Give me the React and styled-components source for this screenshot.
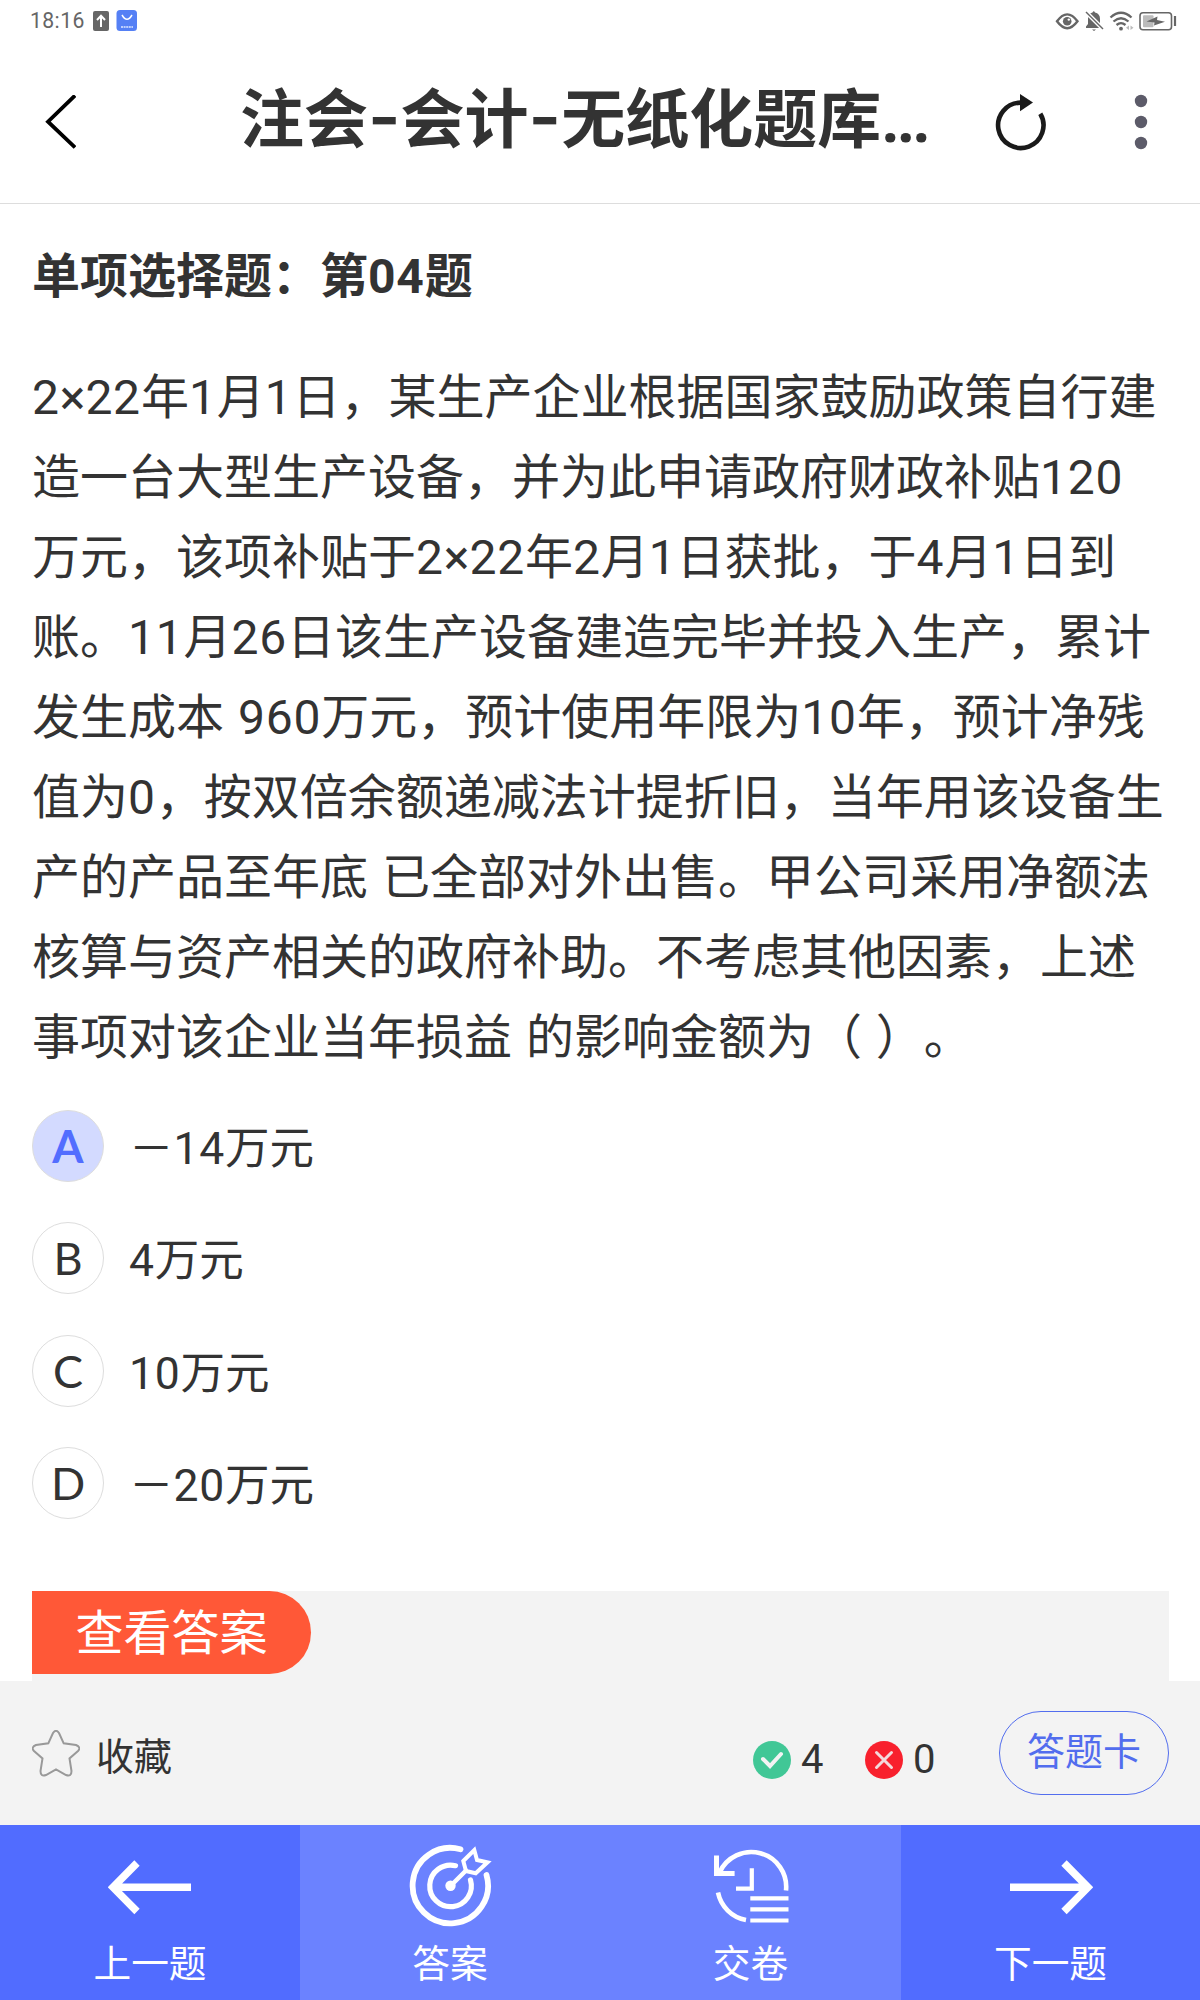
import styled, { createGlobalStyle, css } from "styled-components";

const GlobalStyle = createGlobalStyle`
  * {
    box-sizing: border-box;
  }
  body {
    margin: 0;
    background: #fff;
    color: #333;
    font-family: "Roboto", "Noto Sans CJK SC", sans-serif;
    text-spacing-trim: space-all;
  }
`;

const Page = styled.div`
  display: flex;
  flex-direction: column;
  width: 1200px;
  height: 2000px;
  background: #fff;
  overflow: hidden;
`;

const StatusBar = styled.div`
  display: flex;
  align-items: center;
  justify-content: space-between;
  height: 42px;
  padding: 0 23px 0 30px;
  color: #666;
  > div {
    display: flex;
    align-items: center;
  }
  svg {
    display: block;
  }
`;

const Clock = styled.span`
  width: 62px;
  font-size: 21.2px;
  line-height: 42px;
  letter-spacing: 0.4px;
`;

const Header = styled.header`
  display: flex;
  align-items: center;
  height: 162px;
  padding: 0 52px 2px 44px;
  border-bottom: 1px solid #ddd;
  svg {
    display: block;
  }
`;

const Title = styled.h1`
  width: 690px;
  margin: 0 64px 2px 164px;
  font-size: 64px;
  font-weight: 700;
  line-height: 90px;
  white-space: nowrap;
`;

const Dash = styled.span`
  font-family: "Inter", sans-serif;
  font-size: 70px;
  font-weight: 600;
  line-height: 1;
`;

const Dots = styled.span`
  letter-spacing: -3px;
`;

const IconButton = styled.button`
  padding: 0;
  border: 0;
  background: none;
  & + & {
    margin-left: 88px;
  }
`;

const Main = styled.main`
  flex: 1;
  display: flex;
  flex-direction: column;
  padding: 33px 31px 0 32px;
`;

const QuestionType = styled.h2`
  margin: 0 0 41px;
  font-size: 48px;
  font-weight: 700;
  line-height: 80px;
`;

const Question = styled.p`
  margin: 0;
  font-size: 48px;
  line-height: 80px;
  white-space: nowrap;
  word-spacing: 2px;
  > span {
    display: block;
  }
`;

const Num = styled.span`
  letter-spacing: 0.016em;
`;

const Options = styled.ul`
  display: flex;
  flex-direction: column;
  gap: 40.4px;
  margin: 32px 0 0;
  padding: 0;
  list-style: none;
`;

const Option = styled.li`
  display: flex;
  align-items: center;
  gap: 25px;
  height: 72px;
  font-size: 44.5px;
  line-height: 72px;
  > p {
    margin: 6px 0 0;
  }
`;

const Letter = styled.span`
  width: 72px;
  height: 72px;
  border: 1px solid #ddd;
  border-radius: 50%;
  font-family: "Lato", sans-serif;
  font-size: 45px;
  line-height: 70px;
  text-align: center;
  ${({ $selected }) =>
    $selected &&
    css`
      background: #d3daff;
      color: #526dff;
      font-weight: 700;
    `}
`;

const AnswerPanel = styled.section`
  height: 90px;
  margin-top: auto;
  background: #f3f3f3;
`;

const ShowAnswer = styled.button`
  display: block;
  width: 279px;
  height: 83px;
  padding: 0 0 7px;
  border: 0;
  border-radius: 0 42px 42px 0;
  background: #ff5837;
  color: #fff;
  font: 48px/76px "Noto Sans CJK SC", sans-serif;
`;

const ToolRow = styled.div`
  display: flex;
  align-items: center;
  height: 144px;
  padding: 0 31px 0 32px;
  background: #f3f3f3;
  svg {
    display: block;
  }
`;

const Favorite = styled.div`
  display: flex;
  align-items: center;
  gap: 16px;
  margin-right: auto;
  font-size: 38px;
  line-height: 50px;
  > span {
    margin-top: 8px;
  }
`;

const Count = styled.div`
  display: flex;
  align-items: center;
  gap: 11px;
  width: 112px;
  margin-top: 14px;
  font-size: 40px;
  line-height: 50px;
  > span {
    letter-spacing: -1px;
    margin-left: -1px;
  }
`;

const CardButton = styled.button`
  width: 170px;
  height: 84px;
  margin-left: 22px;
  padding: 0 0 8px;
  border: 1px solid #526dee;
  border-radius: 42px;
  background: none;
  color: #526dee;
  font: 38px/74px "Noto Sans CJK SC", sans-serif;
`;

const TabBar = styled.nav`
  display: grid;
  grid-template-columns: 300px 300px 301px 299px;
  height: 175px;
`;

const Tab = styled.button`
  display: flex;
  flex-direction: column;
  align-items: center;
  padding: 19px 0 0;
  border: 0;
  background: ${({ $light }) => ($light ? "#6b82ff" : "#516cff")};
  color: #fff;
  font: 37.7px/50px "Noto Sans CJK SC", sans-serif;
  svg {
    display: block;
    margin-bottom: 8px;
  }
`;

const question = [
  "2×22年1月1日，某生产企业根据国家鼓励政策自行建",
  "造一台大型生产设备，并为此申请政府财政补贴120",
  "万元，该项补贴于2×22年2月1日获批，于4月1日到",
  "账。11月26日该生产设备建造完毕并投入生产，累计",
  "发生成本 960万元，预计使用年限为10年，预计净残",
  "值为0，按双倍余额递减法计提折旧，当年用该设备生",
  "产的产品至年底 已全部对外出售。甲公司采用净额法",
  "核算与资产相关的政府补助。不考虑其他因素，上述",
  "事项对该企业当年损益 的影响金额为（ ）。",
];

const options = [
  { letter: "A", text: "－14万元" },
  { letter: "B", text: "4万元" },
  { letter: "C", text: "10万元" },
  { letter: "D", text: "－20万元" },
];

// digits are spaced a little wider than the characters around them
const spaced = (text) =>
  text
    .split(/(\d+)/)
    .map((part, i) => (/^\d+$/.test(part) ? <Num key={i}>{part}</Num> : part));

const StatusIcons = () => (
  <svg width="122" height="34" viewBox="1055 4 122 34" fill="none">
    <path
      d="M1057 21.3Q1067.2 7.500 1077.500 21.300Q1067.200 35.100 1057 21.300Z"
      stroke="#666"
      strokeWidth="2.400"
    />
    <circle cx="1067.2" cy="21.2" r="4.3" fill="#666" />
    <circle cx="1068.8" cy="19.6" r="1.2" fill="#fff" />
    <path
      d="M1086 28V26.500L1088 24V19Q1088 13.500 1092.500 12.500Q1093.700 10 1095 12.500Q1100 13.500 1100 19V24L1102 27V28Z M1092 29.500H1096L1094 31Z"
      fill="#666"
    />
    <path d="M1086 12L1103 29" stroke="#fff" strokeWidth="4" />
    <path d="M1086 12L1103 29" stroke="#666" strokeWidth="1.5" />
    <g stroke="#666" strokeWidth="2.300">
      <path d="M1110.500 17.500Q1121 8 1131.500 17.500" />
      <path d="M1113.500 21.500Q1121 15 1128.500 21.500" />
      <path d="M1116.500 25Q1121 21.300 1125.500 25" />
    </g>
    <circle cx="1121" cy="28.7" r="1.9" fill="#666" />
    <path d="M1129 25.500V30L1126 27.800Z M1130.500 25.500V30L1133.500 27.800Z" fill="#bbb" />
    <rect x="1140" y="12.700" width="31.500" height="17" rx="3" stroke="#666" strokeWidth="1.600" />
    <rect x="1143" y="15.300" width="10.500" height="12" rx="1" fill="#bbb" />
    <path d="M1146.500 21.500L1157.500 16.500L1157 20L1165 21.800L1154 25.500L1154.500 22.500Z" fill="#666" />
    <path d="M1175 16V26" stroke="#666" strokeWidth="2.200" />
  </svg>
);

const BackIcon = () => (
  <svg width="32" height="54" viewBox="44 95 32 54" fill="none" stroke="#000" strokeWidth="3.800">
    <path d="M75 95.500L48 121.700L75 147.500" />
  </svg>
);

const RefreshIcon = () => (
  <svg width="52" height="58" viewBox="995 92 52 58">
    <path
      d="M1021.500 101.600A22.700 22.700 0 1 0 1041.300 112.700"
      fill="none"
      stroke="#1a1a1a"
      strokeWidth="4.600"
    />
    <path d="M1021 93L1034 101.500L1021 110.300Z" fill="#1a1a1a" />
  </svg>
);

const MoreIcon = () => (
  <svg width="14" height="56" viewBox="1134 94 14 56" fill="#5c5b69">
    <circle cx="1141" cy="101" r="6.2" />
    <circle cx="1141" cy="122" r="6.2" />
    <circle cx="1141" cy="143" r="6.2" />
  </svg>
);

const StarIcon = () => (
  <svg width="48" height="47" viewBox="32 1730 48 47" fill="none">
    <path
      d="M53 1733Q56 1728.500 59 1733L63.700 1743.300L76 1745Q81.500 1747.500 78 1751L69.500 1758.500L71.500 1771Q71.500 1777 66 1775L56 1769.300L46 1775Q40.500 1777 40.500 1771L42.500 1758.500L34 1751Q30.500 1747.500 36 1745L48.300 1743.300Z"
      stroke="#999"
      strokeWidth="2"
    />
  </svg>
);

const RightIcon = () => (
  <svg width="38" height="38" viewBox="0 0 38 38" fill="none">
    <circle cx="19" cy="19" r="19" fill="#41c796" />
    <path d="M10 18L17 25L28 13" stroke="#f3f3f3" strokeWidth="4" strokeLinecap="round" />
  </svg>
);

const WrongIcon = () => (
  <svg width="38" height="38" viewBox="0 0 38 38" fill="none">
    <circle cx="19" cy="19" r="19" fill="#f8202d" />
    <path d="M11.500 11.500L26.500 26.500M26.500 11.500L11.500 26.500" stroke="#f3d9db" strokeWidth="3" strokeLinecap="round" />
  </svg>
);

const PrevIcon = () => (
  <svg width="84" height="84" viewBox="108 1844 84 84" fill="none" stroke="#fff" strokeWidth="7.500">
    <path d="M191 1887.300H114M137 1863L113 1887.300L137 1911.500" />
  </svg>
);

const NextIcon = () => (
  <svg width="84" height="84" viewBox="1008 1844 84 84" fill="none" stroke="#fff" strokeWidth="7.500">
    <path d="M1009 1887.300H1086M1063 1863L1087 1887.300L1063 1911.500" />
  </svg>
);

const TargetIcon = () => (
  <svg width="84" height="84" viewBox="408 1844 84 84" fill="none" stroke="#fff" strokeLinecap="round">
    <path d="M460.500 1849.300A37.700 37.700 0 1 0 486.500 1875" strokeWidth="5.800" />
    <path d="M455.500 1865.700A20.800 20.800 0 1 0 470.500 1880" strokeWidth="5.200" />
    <path d="M450.500 1886L466 1870.500" strokeWidth="4.500" />
    <path
      d="M463.300 1861L474.300 1850L477 1860L487.500 1862.300L475.700 1873.300L466 1871Z"
      strokeWidth="4"
    />
    <circle cx="450.5" cy="1885.700" r="5.200" fill="#fff" stroke="none" />
  </svg>
);

const SubmitIcon = () => (
  <svg width="84" height="84" viewBox="708 1844 84 84" fill="none" stroke="#fff">
    <path d="M715.500 1855.500V1873.500H733.600" strokeWidth="5" />
    <path d="M718.500 1872.500A34.900 34.900 0 0 1 785 1890.500" strokeWidth="4.600" />
    <path d="M717 1892.500A35 35 0 0 0 745 1920" strokeWidth="4.600" />
    <path d="M750.800 1868.300V1888.700H735" strokeWidth="4.200" />
    <path d="M749.300 1898.300H787.500M749.300 1909.300H787.500M749.300 1920.500H787.500" strokeWidth="4.200" />
  </svg>
);

const App = () => {
  return (
    <Page>
      <GlobalStyle />
      <StatusBar>
        <div>
          <Clock>18:16</Clock>
          <svg width="46" height="24" viewBox="92 9 46 24" fill="none">
            <rect x="93" y="11" width="16" height="20" rx="2" fill="#666" />
            <path d="M101 27V16M97 20L101 15.800L105 20" stroke="#fff" strokeWidth="2" />
            <rect x="116.500" y="10" width="20.500" height="21" rx="3.500" fill="#5580f5" />
            <path d="M122 15Q127 23.500 132 15" stroke="#fff" strokeWidth="1.500" />
            <path d="M121 27H133" stroke="#dfe8ff" strokeWidth="1.500" strokeDasharray="2 .6" />
          </svg>
        </div>
        <StatusIcons />
      </StatusBar>
      <Header>
        <IconButton>
          <BackIcon />
        </IconButton>
        <Title>
          注会<Dash>-</Dash>会计<Dash>-</Dash>无纸化题库<Dots>...</Dots>
        </Title>
        <IconButton>
          <RefreshIcon />
        </IconButton>
        <IconButton>
          <MoreIcon />
        </IconButton>
      </Header>
      <Main>
        <QuestionType>单项选择题：第{spaced("04")}题</QuestionType>
        <Question>
          {question.map((line) => (
            <span key={line}>{spaced(line)}</span>
          ))}
        </Question>
        <Options>
          {options.map(({ letter, text }) => (
            <Option key={letter}>
              <Letter $selected={letter === "A"}>{letter}</Letter>
              <p>{spaced(text)}</p>
            </Option>
          ))}
        </Options>
        <AnswerPanel>
          <ShowAnswer>查看答案</ShowAnswer>
        </AnswerPanel>
      </Main>
      <ToolRow>
        <Favorite>
          <StarIcon />
          <span>收藏</span>
        </Favorite>
        <Count>
          <RightIcon />
          <span>4</span>
        </Count>
        <Count>
          <WrongIcon />
          <span>0</span>
        </Count>
        <CardButton>答题卡</CardButton>
      </ToolRow>
      <TabBar>
        <Tab>
          <PrevIcon />
          上一题
        </Tab>
        <Tab $light>
          <TargetIcon />
          答案
        </Tab>
        <Tab $light>
          <SubmitIcon />
          交卷
        </Tab>
        <Tab>
          <NextIcon />
          下一题
        </Tab>
      </TabBar>
    </Page>
  );
};

export default App;
